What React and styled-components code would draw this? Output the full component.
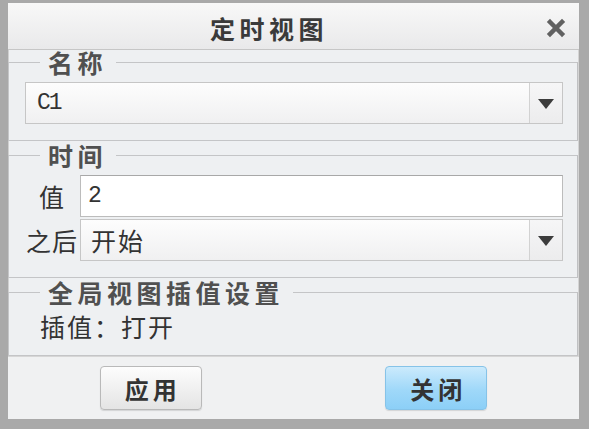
import styled, { createGlobalStyle } from "styled-components";

const GlobalStyle = createGlobalStyle`
  html, body {
    margin: 0;
    padding: 0;
    background: #ffffff;
  }
  body {
    font-family: "Noto Sans CJK SC", "Noto Sans", sans-serif;
  }
`;

export default function App() {
  return (
    <>
      <GlobalStyle />
      <Window>
        <TitleBar>
          <Title>定时视图</Title>
          <CloseButton aria-label="close">
            <svg width="20" height="20" viewBox="0 0 20 20">
              <path
                d="M4 4 L16 16 M16 4 L4 16"
                stroke="#616161"
                strokeWidth="4.5"
                strokeLinecap="square"
              />
            </svg>
          </CloseButton>
        </TitleBar>

        <Body>
          <Group $top={8} $bottom={16}>
            <Legend>名称</Legend>
            <Combo value="C1" mono />
          </Group>

          <Group $top={8} $bottom={16}>
            <Legend>时间</Legend>
            <Row>
              <Label>值</Label>
              <Input>2</Input>
            </Row>
            <Row>
              <Label>之后</Label>
              <Combo value="开始" />
            </Row>
          </Group>

          <Group $top={7} $bottom={14}>
            <Legend>全局视图插值设置</Legend>
            <Info>插值：打开</Info>
          </Group>
        </Body>

        <ButtonRow>
          <Button>应用</Button>
          <Button $primary>关闭</Button>
        </ButtonRow>
      </Window>
    </>
  );
}

function Combo({ value, mono }) {
  return (
    <ComboBox>
      <ComboText $mono={mono}>{value}</ComboText>
      <ComboArrow>
        <svg width="16" height="10" viewBox="0 0 16 10">
          <path d="M0 0 L16 0 L8 10 Z" fill="#3c3c3c" />
        </svg>
      </ComboArrow>
    </ComboBox>
  );
}

const Window = styled.div`
  width: 589px;
  height: 429px;
  box-sizing: border-box;
  border-style: solid;
  border-color: #a9a9a9;
  border-width: 3px 10px 10px 8px;
  background: #eef0f2;
  display: flex;
  flex-direction: column;
  box-shadow: inset 1px 0 0 #cfcfcf, inset -1px 0 0 #d4d4d4;
`;

const TitleBar = styled.div`
  height: 47px;
  flex: none;
  display: flex;
  align-items: center;
  padding-top: 4px;
  box-sizing: border-box;
  background: linear-gradient(#f8f8f8, #e9e9ea);
  border-bottom: 1px solid #c6c6c6;
`;

const Title = styled.div`
  flex: 1;
  text-align: center;
  font-size: 25px;
  font-weight: 700;
  letter-spacing: 4.5px;
  color: #3a3a3a;
  line-height: 30px;
`;

const CloseButton = styled.div`
  width: 47px;
  flex: none;
  display: flex;
  justify-content: center;
  align-items: center;
  padding-left: 2px;
`;

const Body = styled.div`
  display: flex;
  flex-direction: column;
  gap: 2px;
  flex: none;
`;

const Group = styled.fieldset`
  margin: 0 1px 0 0;
  min-width: 0;
  border: 1px solid #c4c5c7;
  border-right-color: #bfc0c2;
  padding: ${(p) => p.$top}px 14px ${(p) => p.$bottom}px 16px;
  display: flex;
  flex-direction: column;
  gap: 2px;
`;

const Legend = styled.legend`
  margin-left: 15px;
  padding: 0 9px 0 8px;
  font-size: 25px;
  font-weight: 700;
  letter-spacing: 4.5px;
  line-height: 24px;
  color: #505050;
`;

const Row = styled.div`
  display: flex;
  align-items: center;
  gap: 1px;
`;

const Label = styled.div`
  width: 54px;
  flex: none;
  text-align: center;
  font-size: 25px;
  letter-spacing: 1px;
  color: #333;
`;

const Input = styled.div`
  flex: 1 0 auto;
  height: 42px;
  box-sizing: border-box;
  border: 1px solid #bcbcbc;
  border-top-color: #a8a8a8;
  background: #ffffff;
  display: flex;
  align-items: center;
  padding-left: 7px;
  font-family: "Liberation Mono", "DejaVu Sans Mono", monospace;
  font-size: 23px;
  color: #333;
`;

const ComboBox = styled.div`
  flex: 1 0 auto;
  height: 42px;
  box-sizing: border-box;
  border: 1px solid #c6c6c6;
  background: linear-gradient(#fdfdfd, #f0f0f1);
  display: flex;
  align-items: stretch;
`;

const ComboText = styled.div`
  flex: 1;
  display: flex;
  align-items: center;
  padding-left: ${(p) => (p.$mono ? 11 : 10)}px;
  font-family: ${(p) =>
    p.$mono
      ? `"Liberation Mono", "DejaVu Sans Mono", monospace`
      : `"Noto Sans CJK SC", sans-serif`};
  font-size: ${(p) => (p.$mono ? 23 : 25)}px;
  letter-spacing: ${(p) => (p.$mono ? -2 : 2)}px;
  color: #333;
`;

const ComboArrow = styled.div`
  width: 32px;
  flex: none;
  border-left: 1px solid #d2d2d2;
  display: flex;
  align-items: center;
  justify-content: center;
  padding-top: 1px;
  background: linear-gradient(#f6f6f7, #ececed);
`;

const Info = styled.div`
  font-size: 25px;
  letter-spacing: 2px;
  line-height: 30px;
  color: #333;
  padding-left: 15px;
`;

const ButtonRow = styled.div`
  flex: 1;
  display: flex;
  justify-content: space-around;
  align-items: center;
  background: #f0f1f2;
  border-top: 1px solid #d6d6d6;
`;

const Button = styled.div`
  width: 102px;
  height: 44px;
  box-sizing: border-box;
  border-radius: 4px;
  border: 1px solid ${(p) => (p.$primary ? "#86c3e8" : "#b9b9b9")};
  background: ${(p) =>
    p.$primary
      ? "linear-gradient(#cbeafc, #9fd8f9 55%, #8ccff7)"
      : "linear-gradient(#fdfdfd, #eeeeee 60%, #e4e4e4)"};
  display: flex;
  align-items: center;
  justify-content: center;
  font-size: 24px;
  font-weight: 700;
  letter-spacing: 4px;
  padding-left: 4px;
  color: #333;
  box-shadow: 0 1px 1px rgba(0, 0, 0, 0.12);
`;
